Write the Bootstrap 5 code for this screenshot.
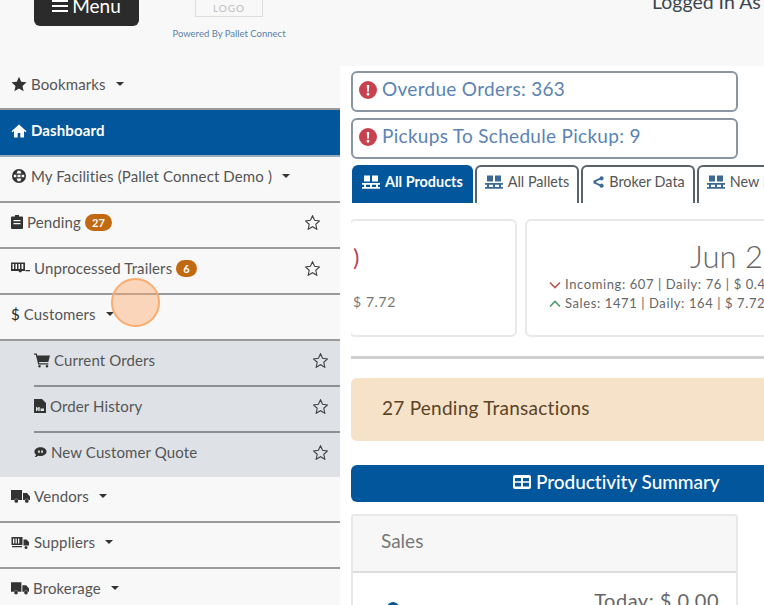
<!DOCTYPE html>
<html lang="en"><head><meta charset="utf-8"><title>Dashboard</title>
<link href="https://cdn.jsdelivr.net/npm/bootstrap@5.3.0/dist/css/bootstrap.min.css" rel="stylesheet">
<style>
html,body{height:605px;overflow:hidden}
body{font-family:"Lato","Liberation Sans",sans-serif;font-size:15px;color:#555;background:#fff}
.ic{width:16px;height:16px;fill:#333;flex:none}
.ic-narrow{width:12px}
.ic-wide{width:18px}
.ic-trail{width:19px}
.ic-truck{width:19px}
.ic-share{width:13px}
.ic-alert{fill:#c8414f;width:18px;height:18px}
.shell{height:605px;overflow:hidden;position:relative}
.topbar{height:66px;background:#f8f8f8;padding-left:34px}
.menu-btn{width:105px;height:40px;margin-top:-14px;background:#2b2b2b;color:#fff;border-radius:6px;font-size:19px;border:0;flex:none}
.logo-col{width:114px;margin-left:33px;color:#5c7fa8;font-size:9.5px}
.logo-box{width:68px;height:30px;margin-top:-13px;border:1px solid #ddd;color:#bbb;font-size:10px;letter-spacing:1px}
.powered{margin-top:10px;white-space:nowrap}
.login{margin-left:auto;width:112px;font-size:19.5px;line-height:1;margin-top:-8px;color:#3c4650;white-space:nowrap;overflow:hidden}
.side{width:340px;flex:none;background:#f8f8f8;height:539px;overflow:hidden;letter-spacing:.12px}
.side-row{height:46px;padding:0 12px 6px 11px;border-bottom:2px solid #9a9a9a;color:#555;gap:4px}
.side-row.first{height:44px}
.side-row.active-row{background:#02569b;color:#fff;border-bottom-color:#9ab;font-weight:700;height:47px;padding-bottom:4px}
.side-row.active-row .ic{fill:#fff}
.side-row.plain{border-bottom-color:transparent}
.caret-mark{width:0;height:0;margin-left:6px;border-left:4px solid transparent;border-right:4px solid transparent;border-top:4px solid #333}
.star-btn{margin-left:auto;margin-right:8px;width:15px;height:15px;fill:none;stroke:#444;stroke-width:1.2;flex:none}
.sub-list{background:#dee2e6;padding-left:34px}
.sub-row{height:46px;padding:0 12px 6px 0;border-bottom:2px solid #8d8f92;gap:4px;color:#555}
.sub-row:last-child{border-bottom:0;height:44px}
.sub-row .star-btn{margin-right:0}
.pill{background:#c26a12;color:#fff;font-size:11px;font-weight:700;line-height:1;padding:3px 7px;border-radius:10px;margin-left:0}
.main-col{width:424px;flex:none;padding:5px 0 0 11px;overflow:hidden;background:#fff}
.notice{width:387px;height:41px;border:2px solid #8a97a3;border-radius:6px;padding:0 6px 4px 6px;margin-bottom:6px;color:#5b83b3;font-size:19px;letter-spacing:.3px;gap:5px}
.tabs-row{flex-wrap:nowrap;width:413px;gap:2px;border-bottom:0;overflow:hidden;height:38px;padding-left:1px}
.tab-item{flex:none;height:38px;padding:0 8px 6px;border:2px solid #58626b;border-bottom:0;border-radius:6px 6px 0 0;background:#fff;color:#555;gap:5px;font-size:14.4px;white-space:nowrap}
.tab-item.on{background:#02569b;border-color:#02569b;color:#fff;font-weight:700}
.tab-item.on .ic{fill:#fff}
.tab-item .ic{fill:#3d6a94}
.stats{margin-top:16px;gap:8px;width:413px;overflow:hidden;height:118px}
.stat-card{height:118px;flex:none;border:2px solid #e9e9e9;border-radius:6px;background:#fff}
.stat-a{width:168px;margin-left:-2px;padding:20px 0 0 2px;color:#777;font-size:14px;letter-spacing:.6px}
.stat-a .paren{color:#b5475a;font-size:24px;line-height:32px;display:block;margin-bottom:18px}
.stat-a .amt{display:block}
.stat-b{width:300px;padding:16px 0 0 22px;font-size:13px;color:#666;white-space:nowrap;letter-spacing:.6px}
.stat-b .month{font-size:31px;line-height:38px;padding-left:141px;color:#666;letter-spacing:0;font-weight:300}
.stat-b .ln{line-height:19px;gap:4px}
.divider{width:413px;height:3px;background:#cfcfcf;margin:19px 0}
.pending-box{width:413px;height:63px;background:#f5e2c9;border-radius:6px 0 0 6px;padding:0 0 2px 31px;color:#5c4326;font-size:19px;letter-spacing:.25px}
.prod-bar{width:413px;height:37px;background:#02569b;border-radius:6px 0 0 6px;margin-top:24px;color:#fff;font-size:19px;font-weight:500;padding:0 0 3px 162px;gap:5px;letter-spacing:-.05px}
.prod-bar .ic{fill:#fff;width:18px;height:18px}
.sales-card{width:387px;margin-top:12px;border:2px solid #e8e8e8;border-radius:4px}
.sales-head{height:57px;background:#f7f7f7;border-bottom:2px solid #ddd;padding:0 0 4px 28px;font-size:19px;color:#777}
.sales-body{height:40px;padding:12px 17px 0 34px;font-size:20px;color:#666;letter-spacing:.5px}
.blue-dot{width:12px;height:12px;margin-top:17px;fill:#02569b;flex:none}
.touch{position:absolute;left:111px;top:278px;width:49px;height:49px;border-radius:50%;background:rgba(255,170,110,.45);border:2px solid #f8ac70}
</style></head><body>
<svg width="0" height="0" class="d-none"><defs>
<symbol id="i-star" viewBox="0 0 16 16"><path d="M8 .8l2.2 4.9 5.3.6-4 3.6 1.100 5.300L8 12.500l-4.600 2.700 1.100-5.300-4-3.600 5.300-.6z"/></symbol>
<symbol id="i-home" viewBox="0 0 16 16"><path d="M8 1.500L.5 8.200l1 1.100L3 8v6.500h3.700V10h2.600v4.500H13V8l1.500 1.300 1-1.100z"/></symbol>
<symbol id="i-globe" viewBox="0 0 16 16"><path fill-rule="evenodd" d="M8 1a7 7 0 100 14A7 7 0 008 1zM6.800 2.700C6.200 3.500 5.800 4.500 5.600 5.500h4.800c-.2-1-.6-2-1.200-2.800zM2.900 6.700a5 5 0 000 2.600h2.500a12 12 0 010-2.600zm3.700 0a10 10 0 000 2.600h2.800a10 10 0 000-2.600zm4 0a12 12 0 010 2.600h2.500a5 5 0 000-2.600zM5.600 10.500c.2 1 .6 2 1.200 2.800h2.400c.6-.8 1-1.800 1.200-2.800z"/></symbol>
<symbol id="i-clip" viewBox="0 0 12 16"><path d="M4 1h4v1.500h2.800A1 1 0 0112 3.500V14a1 1 0 01-1 1H1a1 1 0 01-1-1V3.500a1 1 0 011-1h3zM2.500 6v1.300h7V6zm0 3v1.300h7V9z"/></symbol>
<symbol id="i-trailer" viewBox="0 0 19 16"><path fill-rule="evenodd" d="M0 2.500h14v8.500h-3a1.800 1.800 0 01-3.500 0H0zm1.500 1.500v5h1.500V4zm3 0v5H6V4zm3 0v5H9V4zm3 0v5h1.800V4zM14.500 10H19v1.300h-4.500z"/></symbol>
<symbol id="i-cart" viewBox="0 0 16 16"><path d="M0 1.500h2.800L3.300 3.500H16l-1.700 6.500H5l.3 1.300h9v1.300H4.200L1.800 2.800H0zM5.500 13a1.300 1.300 0 110 2.600 1.300 1.300 0 010-2.600zm7.500 0a1.300 1.300 0 110 2.600 1.300 1.300 0 010-2.600z"/></symbol>
<symbol id="i-file" viewBox="0 0 12 16"><path fill-rule="evenodd" d="M0 1h8l4 4v9.500a.5.5 0 01-.5.500H.5a.5.5 0 01-.5-.5zm2 8v4h1.300v-1.500h1V13h1.400V9H4.300v1.300h-1V9zm4.500 1.500V13H10v-2.500z"/></symbol>
<symbol id="i-quote" viewBox="0 0 16 16"><path fill-rule="evenodd" d="M8 2c4 0 7.500 2.300 7.500 5.500S12 13 8 13c-1 0-2-.1-2.800-.4C4 13.600 2.500 14.300.8 14.300c.9-.9 1.500-1.900 1.700-2.900C1.200 10.400.5 9 .5 7.500.5 4.300 4 2 8 2zM5 6v3h2.200V6zm3.800 0v3H11V6z"/></symbol>
<symbol id="i-truck" viewBox="0 0 19 16"><path d="M0 2h11v10H7.300a2.200 2.200 0 00-4 0H0zM12 5h4l3 3.500V12h-1.200a2.200 2.200 0 00-4 0H12zM5.300 11a1.900 1.900 0 110 3.800 1.900 1.900 0 010-3.800zm10.500 0a1.900 1.900 0 110 3.800 1.900 1.900 0 010-3.800z"/></symbol>
<symbol id="i-supply" viewBox="0 0 18 16"><path fill-rule="evenodd" d="M0 3h11v8H0zm1.500 1.500v5h1.300v-5zm2.500 0v5h1.300v-5zm2.500 0v5h1.300v-5zM12 5.500h3l2.500 2.500v3.500H12zM.5 12h10v1.300H.5zM14.500 12a1.500 1.500 0 110 3 1.500 1.500 0 010-3z"/></symbol>
<symbol id="i-pallet" viewBox="0 0 18 16"><path d="M2 1.500h6v6H2zM10 1.500h6v6h-6zM0 9h18v1.800H0zM0 13h18v1.800H0zM2 10h2v4H2zM8 10h2v4H8zM14 10h2v4h-2z"/></symbol>
<symbol id="i-share" viewBox="0 0 16 16"><path d="M13 1a2.500 2.500 0 11-1.800 4.200L6.400 7.300a2.500 2.500 0 010 1.400l4.800 2.100A2.500 2.500 0 1110.500 13L5.300 10.500a2.500 2.500 0 110-5L10.500 3A2.500 2.500 0 0113 1z"/></symbol>
<symbol id="i-alert" viewBox="0 0 16 16"><path fill-rule="evenodd" d="M8 0a8 8 0 110 16A8 8 0 018 0zM6.900 3.500l.4 6h1.400l.4-6zM8 10.500a1.300 1.300 0 100 2.600 1.300 1.300 0 000-2.600z"/></symbol>
<symbol id="i-grid" viewBox="0 0 18 16"><path fill-rule="evenodd" d="M2 1h14a2 2 0 012 2v10a2 2 0 01-2 2H2a2 2 0 01-2-2V3a2 2 0 012-2zm0 3v3.300h6V4zm8 0v3.300h6V4zM2 8.800V12.500h6V8.800zm8 0V12.500h6V8.800z"/></symbol>
</defs></svg>
<div class="shell">
<header class="topbar d-flex">
  <button class="menu-btn d-flex align-items-center justify-content-center gap-1" type="button"><svg width="16" height="14" viewBox="0 0 16 14"><path fill="#fff" d="M0 1h16v2H0zM0 6h16v2H0zM0 11h16v2H0z"/></svg>Menu</button>
  <div class="logo-col d-flex flex-column align-items-center">
    <div class="logo-box d-flex align-items-end justify-content-center">LOGO</div>
    <div class="powered">Powered By Pallet Connect</div>
  </div>
  <div class="login">Logged In As</div>
</header>
<div class="d-flex">
  <nav class="side">
    <div class="side-row first d-flex align-items-center"><svg class="ic"><use href="#i-star"/></svg>Bookmarks<span class="caret-mark"></span></div>
    <div class="side-row active-row d-flex align-items-center"><svg class="ic"><use href="#i-home"/></svg>Dashboard</div>
    <div class="side-row d-flex align-items-center"><svg class="ic"><use href="#i-globe"/></svg>My Facilities (Pallet Connect Demo )<span class="caret-mark"></span></div>
    <div class="side-row d-flex align-items-center"><svg class="ic ic-narrow"><use href="#i-clip"/></svg>Pending <span class="pill">27</span><svg class="star-btn" viewBox="0 0 16 16"><use href="#i-star"/></svg></div>
    <div class="side-row d-flex align-items-center"><svg class="ic ic-trail"><use href="#i-trailer"/></svg>Unprocessed Trailers <span class="pill">6</span><svg class="star-btn" viewBox="0 0 16 16"><use href="#i-star"/></svg></div>
    <div class="side-row d-flex align-items-center"><span class="text-dark">$</span>Customers<span class="caret-mark"></span></div>
    <div class="sub-list">
      <div class="sub-row d-flex align-items-center"><svg class="ic"><use href="#i-cart"/></svg>Current Orders<svg class="star-btn" viewBox="0 0 16 16"><use href="#i-star"/></svg></div>
      <div class="sub-row d-flex align-items-center"><svg class="ic ic-narrow"><use href="#i-file"/></svg>Order History<svg class="star-btn" viewBox="0 0 16 16"><use href="#i-star"/></svg></div>
      <div class="sub-row d-flex align-items-center"><svg class="ic ic-share"><use href="#i-quote"/></svg>New Customer Quote<svg class="star-btn" viewBox="0 0 16 16"><use href="#i-star"/></svg></div>
    </div>
    <div class="side-row d-flex align-items-center"><svg class="ic ic-truck"><use href="#i-truck"/></svg>Vendors<span class="caret-mark"></span></div>
    <div class="side-row d-flex align-items-center"><svg class="ic ic-truck"><use href="#i-supply"/></svg>Suppliers<span class="caret-mark"></span></div>
    <div class="side-row plain d-flex align-items-center"><svg class="ic ic-wide"><use href="#i-truck"/></svg>Brokerage<span class="caret-mark"></span></div>
  </nav>
  <main class="main-col">
    <div class="notice d-flex align-items-center"><svg class="ic ic-alert"><use href="#i-alert"/></svg>Overdue Orders: 363</div>
    <div class="notice d-flex align-items-center"><svg class="ic ic-alert"><use href="#i-alert"/></svg>Pickups To Schedule Pickup: 9</div>
    <div class="nav tabs-row">
      <div class="tab-item on d-flex align-items-center"><svg class="ic ic-wide"><use href="#i-pallet"/></svg>All Products</div>
      <div class="tab-item d-flex align-items-center"><svg class="ic ic-wide"><use href="#i-pallet"/></svg>All Pallets</div>
      <div class="tab-item d-flex align-items-center"><svg class="ic ic-share"><use href="#i-share"/></svg>Broker Data</div>
      <div class="tab-item d-flex align-items-center"><svg class="ic ic-wide"><use href="#i-pallet"/></svg>New Pallets</div>
    </div>
    <div class="stats d-flex">
      <div class="stat-card stat-a"><span class="paren">)</span><span class="amt">$ 7.72</span></div>
      <div class="stat-card stat-b">
        <div class="month">Jun 2</div>
        <div class="ln d-flex align-items-center"><svg width="12" height="8" viewBox="0 0 12 8"><path fill="none" stroke="#b5574f" stroke-width="1.600" d="M1 1.500l5 5 5-5"/></svg>Incoming: 607 | Daily: 76 | $ 0.4</div>
        <div class="ln d-flex align-items-center"><svg width="12" height="8" viewBox="0 0 12 8"><path fill="none" stroke="#4f9a68" stroke-width="1.600" d="M1 6.500l5-5 5 5"/></svg>Sales: 1471 | Daily: 164 | $ 7.72</div>
      </div>
    </div>
    <div class="divider"></div>
    <div class="pending-box d-flex align-items-center">27 Pending Transactions</div>
    <div class="prod-bar d-flex align-items-center"><svg class="ic"><use href="#i-grid"/></svg>Productivity Summary</div>
    <div class="sales-card">
      <div class="sales-head d-flex align-items-center">Sales</div>
      <div class="sales-body d-flex justify-content-between"><svg class="blue-dot" viewBox="0 0 12 12"><circle cx="6" cy="6" r="6"/></svg><span>Today: $ 0.00</span></div>
    </div>
  </main>
</div>
<div class="touch"></div>
</div>
<script src="https://cdn.jsdelivr.net/npm/bootstrap@5.3.0/dist/js/bootstrap.bundle.min.js"></script>
</body></html>
